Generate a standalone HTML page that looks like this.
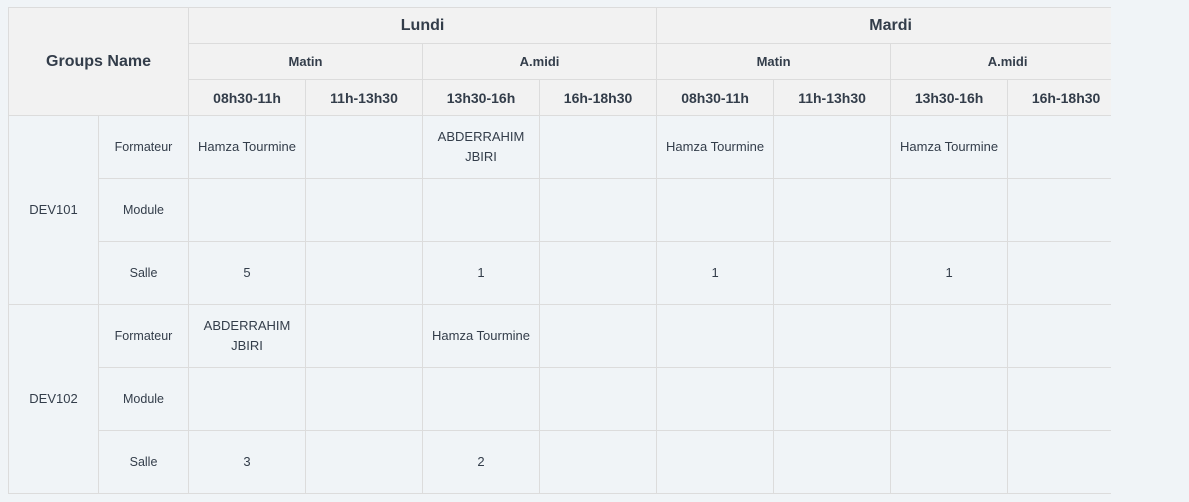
<!DOCTYPE html>
<html><head><meta charset="utf-8"><style>
html,body{margin:0;padding:0;background:#f0f4f7;width:1189px;height:502px;overflow:hidden}
.wrap{position:absolute;left:8px;top:7px;width:1103px;height:487px;overflow:hidden}
table{border-collapse:collapse;table-layout:fixed;width:1117px;font-family:"Liberation Sans",sans-serif;color:#333d4a}
td,th{border:1px solid #dcdcdc;text-align:center;padding:0 6px;overflow:hidden}
th{background:#f2f2f2;font-weight:bold}
.d{height:35px;font-size:16px}
.p{height:35px;font-size:13px}
.t{height:35px;font-size:14px}
td{height:62px;font-size:13px;line-height:20px}
td.l{font-size:12.5px}
</style></head><body><div class="wrap"><table>
<colgroup><col style="width:90px"><col style="width:90px"><col span="8" style="width:117px"></colgroup>
<tr><th colspan="2" rowspan="3" style="font-size:16px">Groups Name</th><th colspan="4" class="d">Lundi</th><th colspan="4" class="d">Mardi</th></tr>
<tr><th colspan="2" class="p">Matin</th><th colspan="2" class="p">A.midi</th><th colspan="2" class="p">Matin</th><th colspan="2" class="p">A.midi</th></tr>
<tr><th class="t">08h30-11h</th><th class="t">11h-13h30</th><th class="t">13h30-16h</th><th class="t">16h-18h30</th><th class="t">08h30-11h</th><th class="t">11h-13h30</th><th class="t">13h30-16h</th><th class="t">16h-18h30</th></tr>
<tr><td rowspan="3">DEV101</td><td class="l">Formateur</td><td>Hamza Tourmine</td><td></td><td>ABDERRAHIM JBIRI</td><td></td><td>Hamza Tourmine</td><td></td><td>Hamza Tourmine</td><td></td></tr>
<tr><td class="l">Module</td><td></td><td></td><td></td><td></td><td></td><td></td><td></td><td></td></tr>
<tr><td class="l">Salle</td><td>5</td><td></td><td>1</td><td></td><td>1</td><td></td><td>1</td><td></td></tr>
<tr><td rowspan="3">DEV102</td><td class="l">Formateur</td><td>ABDERRAHIM JBIRI</td><td></td><td>Hamza Tourmine</td><td></td><td></td><td></td><td></td><td></td></tr>
<tr><td class="l">Module</td><td></td><td></td><td></td><td></td><td></td><td></td><td></td><td></td></tr>
<tr><td class="l">Salle</td><td>3</td><td></td><td>2</td><td></td><td></td><td></td><td></td><td></td></tr>
</table></div></body></html>
